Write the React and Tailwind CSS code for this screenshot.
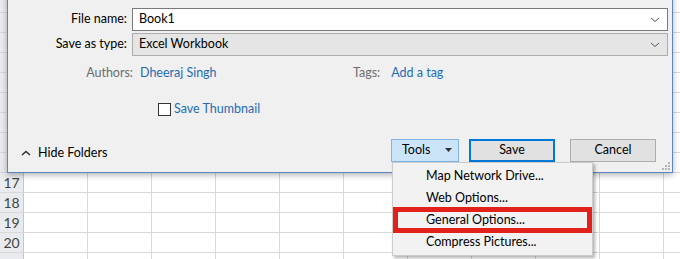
import React from 'react'

const font = { fontFamily: 'Lato, "Noto Sans", Arial, sans-serif' }

const rows = [8, 9, 10, 11, 12, 13, 14, 15, 16, 17, 18, 19, 20, 21]
const cols = Array.from({ length: 10 })

const Chevron = ({ up }) => (
  <svg width="10" height="6" viewBox="0 0 10 6" className="block">
    <path d={up ? 'M1 5 L5 1.5 L9 5' : 'M1 1 L5 4.5 L9 1'} fill="none" stroke={up ? '#333' : '#555'} strokeWidth={up ? 1.6 : 1} />
  </svg>
)

const Sheet = () => (
  <div className="mt-[-7px] flex flex-col">
    {rows.map((r) => (
      <div key={r} className="flex h-[20px] border-b border-[#d8d8d8]">
        <div className="flex w-[24px] shrink-0 items-center justify-center border-r border-[#c6c6c6] bg-[#e9ebee] text-[14px] text-[#444]">
          {r >= 17 && r <= 20 ? r : ''}
        </div>
        {cols.map((_, i) => (
          <div key={i} className="w-[64px] shrink-0 border-r border-[#d8d8d8] bg-white" />
        ))}
      </div>
    ))}
  </div>
)

const Field = ({ label, value, white }) => (
  <div className="flex items-center">
    <div className="w-[124px] shrink-0 pr-[5px] text-right">{label}</div>
    <div
      className={
        'flex h-[23px] flex-1 items-center justify-between border pl-[6px] pr-[7px] ' +
        (white ? 'border-[#7a7a7a] bg-white' : 'border-[#adadad] bg-[#e5e5e5]')
      }
    >
      <span>{value}</span>
      <Chevron />
    </div>
  </div>
)

const menu = ['Map Network Drive...', 'Web Options...', 'General Options...', 'Compress Pictures...']

export default function App() {
  return (
    <div className="relative h-[259px] w-[680px] overflow-hidden bg-white text-[12.5px] text-black" style={font}>
      <Sheet />

      {/* dialog window */}
      <div className="absolute left-[7px] top-[-12px] h-[185px] w-[666px] border border-[#5b86c2] bg-[#f0f0f0] shadow-[0_2px_6px_rgba(0,0,0,0.3)]">
        <div className="flex flex-col gap-[2px] pr-[4px] pt-[19px]">
          <Field label="File name:" value="Book1" white />
          <Field label="Save as type:" value="Excel Workbook" />
        </div>

        <div className="mt-[8px] flex items-center">
          <div className="w-[125px] shrink-0 text-right text-[#6d6d6d]">Authors:</div>
          <div className="ml-[7px] w-[213px] text-[#1f6cb5]">Dheeraj Singh</div>
          <div className="text-[#6d6d6d]">Tags:</div>
          <div className="ml-[11px] text-[#1f6cb5]">Add a tag</div>
        </div>

        <div className="ml-[150px] mt-[17px] flex items-center gap-[3px]">
          <div className="h-[13px] w-[13px] border border-[#333] bg-white" />
          <span className="text-[#1f6cb5]">Save Thumbnail</span>
        </div>

        <div className="mt-[20px] flex items-center">
          <div className="flex items-center gap-[7px] pl-[13px] pt-[5px]">
            <Chevron up />
            <span>Hide Folders</span>
          </div>
          <div className="ml-auto mr-[16px] flex items-center">
            <div className="flex h-[23px] w-[68px] items-center justify-between border border-[#7eb4ea] bg-[#cce4f7] pl-[10px] pr-[6px]">
              <span>Tools</span>
              <svg width="7" height="4" viewBox="0 0 7 4">
                <path d="M0 0 L7 0 L3.5 4 Z" fill="#333" />
              </svg>
            </div>
            <div className="ml-[10px] flex h-[23px] w-[86px] items-center justify-center border-2 border-[#0078d7] bg-[#e1e1e1]">
              Save
            </div>
            <div className="ml-[15px] flex h-[23px] w-[86px] items-center justify-center border border-[#adadad] bg-[#e1e1e1]">
              Cancel
            </div>
          </div>
        </div>

        <svg width="8" height="8" viewBox="0 0 8 8" className="absolute bottom-[2px] right-[2px]">
          <g fill="#b5b5b5">
            <rect x="6" y="0" width="2" height="2" />
            <rect x="3" y="3" width="2" height="2" />
            <rect x="6" y="3" width="2" height="2" />
            <rect x="0" y="6" width="2" height="2" />
            <rect x="3" y="6" width="2" height="2" />
            <rect x="6" y="6" width="2" height="2" />
          </g>
        </svg>
      </div>

      {/* tools dropdown menu */}
      <div className="absolute left-[392px] top-[162px] w-[201px] border border-[#cccccc] bg-[#f2f2f2] py-[2px] shadow-[2px_2px_3px_rgba(0,0,0,0.3)]">
        {menu.map((m) => (
          <div key={m} className="flex h-[22px] items-center pl-[33px]">
            {m}
          </div>
        ))}
      </div>

      {/* highlight annotation */}
      <div className="absolute left-[393px] top-[207px] h-[26px] w-[199px] border-[5px] border-[#e2211c]" />
    </div>
  )
}
